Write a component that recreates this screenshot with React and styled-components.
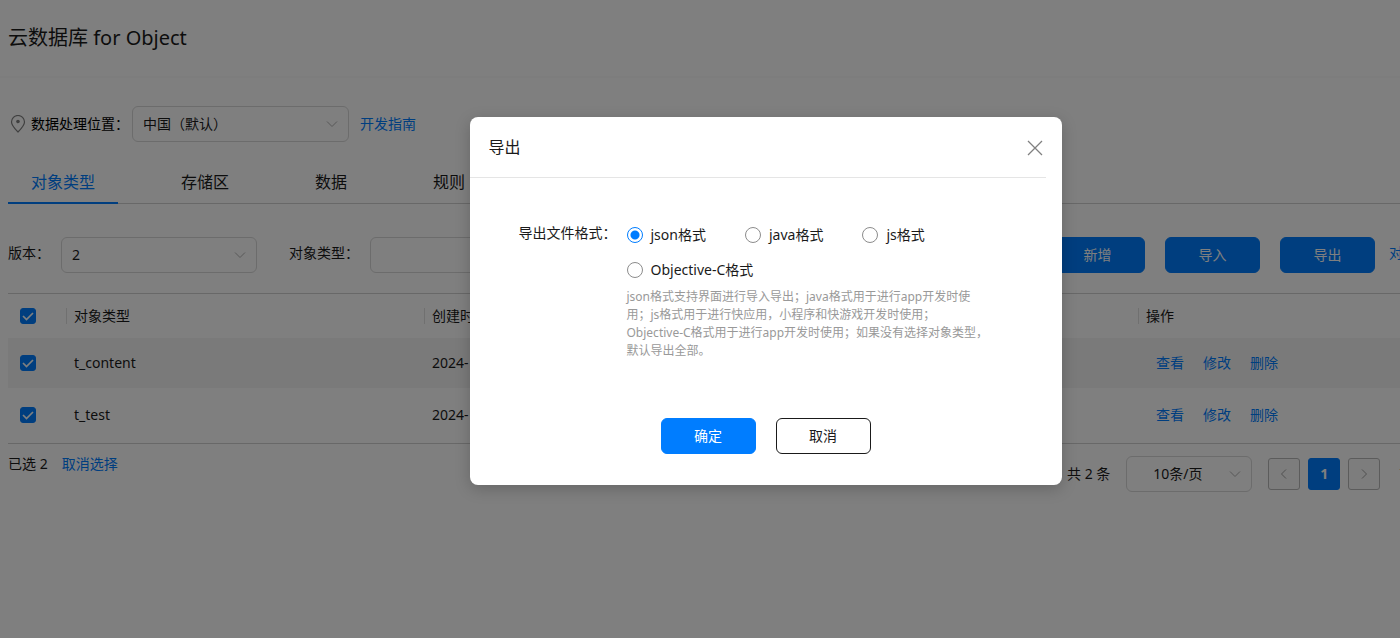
import React, { useState } from 'react';
import styled, { createGlobalStyle, css } from 'styled-components';

const GlobalStyle = createGlobalStyle`
  * {
    box-sizing: border-box;
  }

  body {
    margin: 0;
    overflow-x: hidden;
    background: #fff;
    color: #1a1a1a;
    font-family: 'Noto Sans', 'Noto Sans CJK SC', sans-serif;
    font-size: 14px;
    line-height: 20px;
  }

  button,
  input,
  select {
    font: inherit;
    color: inherit;
  }
`;

const Page = styled.div`
  position: relative;
  min-width: 1531px;
  min-height: 100vh;
  background: #fff;
`;

const Header = styled.header`
  display: flex;
  align-items: center;
  height: 78px;
  padding: 0 8px;
  border-bottom: 2px solid #fafafa;
`;

const Title = styled.h1`
  margin: 0;
  font-size: 20px;
  line-height: 28px;
  font-weight: 400;
`;

const Content = styled.main`
  padding: 29px 8px 0;
`;

const Location = styled.div`
  display: flex;
  align-items: center;
  height: 34px;
`;

const PinIcon = styled.svg`
  width: 16px;
  height: 18px;
  margin: 0 5px 0 2px;
`;

const LocationLabel = styled.label`
  width: 101px;
  color: #000;
`;

const SelectBox = styled.div`
  display: grid;
  align-items: center;
  width: ${(p) => p.$width}px;
  height: 36px;

  > * {
    grid-area: 1 / 1;
  }
`;

const Select = styled.select`
  width: 100%;
  height: 100%;
  padding: 0 ${(p) => (p.$center ? 26 : 10)}px;
  appearance: none;
  border: 1px solid #d8d8d8;
  border-radius: 6px;
  background: transparent;
`;

const Arrow = styled.svg`
  width: 12px;
  height: 12px;
  margin-right: 11px;
  justify-self: end;
  pointer-events: none;
`;

const Link = styled.a`
  color: #007dff;
  text-decoration: none;
  white-space: nowrap;
`;

const GuideLink = styled(Link)`
  margin-left: 11px;
`;

const Tabs = styled.nav`
  display: flex;
  gap: 40px;
  margin-top: 19px;
  border-bottom: 1px solid #d0d0d0;
`;

const Tab = styled.button`
  height: 44px;
  margin-bottom: -1px;
  padding: 2px 23px 0;
  border: 0;
  border-bottom: 2px solid ${(p) => (p.$active ? '#007dff' : 'transparent')};
  background: none;
  color: ${(p) => (p.$active ? '#007dff' : '#1a1a1a')};
  font-size: 16px;
  line-height: 24px;
`;

const Toolbar = styled.div`
  display: flex;
  align-items: center;
  margin: 33px 0 20px;
`;

const Field = styled.div`
  display: flex;
  align-items: center;
  margin-right: 32px;
`;

const FieldLabel = styled.label`
  width: ${(p) => p.$width}px;
  padding-bottom: 4px;
`;

const TextInput = styled.input`
  width: 196px;
  height: 36px;
  padding: 0 10px;
  border: 1px solid #d8d8d8;
  border-radius: 6px;
`;

const Actions = styled.div`
  display: flex;
  align-items: center;
  gap: 14px;
  width: 473px;
  margin-left: auto;
`;

const ButtonGroup = styled.div`
  display: flex;
  gap: 20px;
`;

const HelpLink = styled(Link)`
  padding-bottom: 4px;
`;

const Button = styled.button`
  flex: none;
  width: 95px;
  height: 36px;
  padding: 0;
  border: 1px solid #007dff;
  border-radius: 6px;
  background: #007dff;
  color: #fff;

  ${(p) =>
    p.$outline &&
    css`
      border-color: #1a1a1a;
      background: #fff;
      color: #1a1a1a;
    `}
`;

const Table = styled.table`
  width: 100%;
  border-collapse: collapse;
  border-top: 1px solid #d0d0d0;
  border-bottom: 1px solid #d0d0d0;
  table-layout: fixed;
`;

const HeadCell = styled.th`
  height: 44px;
  padding: 0;
  text-align: left;
  font-weight: 400;
`;

const HeadText = styled.div`
  height: 16px;
  padding-left: 7px;
  border-left: 1px solid #e0e0e0;
  line-height: 16px;
`;

const Row = styled.tr`
  height: ${(p) => (p.$striped ? 50 : 56)}px;
  background: ${(p) => (p.$striped ? '#f5f5f5' : '#fff')};
`;

const Cell = styled.td`
  padding: 0 0 0 8px;
`;

const CheckCell = styled.div`
  display: flex;
  padding-left: 12px;
`;

const SelectCell = styled.td`
  padding: 0;
`;

const Checkbox = styled.input`
  width: 16px;
  height: 16px;
  margin: 0;
  appearance: none;
  border: 1px solid #8c8c8c;
  border-radius: 3px;

  &:checked {
    border-color: #007dff;
    background: #007dff
      url("data:image/svg+xml,%3Csvg xmlns='http://www.w3.org/2000/svg' viewBox='0 0 14 14'%3E%3Cpath d='M2 7l3.500 3.500L12 4' fill='none' stroke='white' stroke-width='1.700'/%3E%3C/svg%3E");
  }
`;

const RowActions = styled.div`
  display: flex;
  gap: 19px;
  padding-left: 10px;
`;

const Footer = styled.div`
  display: flex;
  align-items: flex-start;
  justify-content: space-between;
  padding-top: 10px;
`;

const Selected = styled.div`
  display: flex;
  gap: 14px;
`;

const Pagination = styled.div`
  display: flex;
  align-items: center;
  gap: 16px;
  width: 456px;
  padding-top: 2px;
`;

const PageButtons = styled.div`
  display: flex;
  gap: 8px;
  margin-right: 3px;
`;

const PageButton = styled.button`
  display: flex;
  align-items: center;
  justify-content: center;
  width: 32px;
  height: 32px;
  padding: 0;
  border: 1px solid ${(p) => (p.$active ? '#007dff' : '#b8b8b8')};
  border-radius: 3px;
  background: ${(p) => (p.$active ? '#007dff' : '#fafafa')};
  color: ${(p) => (p.$active ? '#fff' : '#a0a0a0')};
  font-weight: 700;
`;

const Overlay = styled.div`
  position: absolute;
  inset: 0;
  display: flex;
  align-items: flex-start;
  justify-content: center;
  padding-top: 117px;
  background: rgba(0, 0, 0, 0.5);
`;

const Dialog = styled.section`
  width: 592px;
  border-radius: 8px;
  background: #fff;
  box-shadow: 0 4px 16px rgba(0, 0, 0, 0.2);
`;

const DialogHeader = styled.div`
  display: flex;
  align-items: center;
  justify-content: space-between;
  height: 61px;
  margin-right: 16px;
  padding-left: 19px;
  border-bottom: 1px solid #e5e5e5;
`;

const DialogTitle = styled.h2`
  margin: 0;
  font-size: 16px;
  line-height: 24px;
  font-weight: 400;
`;

const CloseButton = styled.button`
  display: flex;
  padding: 4px 3px 3px;
  border: 0;
  background: none;
`;

const DialogBody = styled.div`
  display: flex;
  padding: 45px 49px 0;
`;

const FormatLabel = styled.div`
  flex: none;
  width: 108px;
`;

const FormatField = styled.div`
  width: 364px;
`;

const Options = styled.div`
  display: flex;
  flex-wrap: wrap;
  gap: 15px 39px;
  padding-top: 2px;
`;

const Option = styled.label`
  display: flex;
  align-items: center;
  gap: 8px;
`;

const Radio = styled.input`
  width: 16px;
  height: 16px;
  margin: 0;
  appearance: none;
  border: 1px solid #8c8c8c;
  border-radius: 50%;

  &:checked {
    border-color: #007dff;
    background: radial-gradient(circle, #007dff 4px, #fff 5px);
  }
`;

const Hint = styled.p`
  margin: 8px 0 0;
  color: #999;
  font-size: 12px;
  line-height: 18px;
`;

const DialogFooter = styled.div`
  display: flex;
  justify-content: center;
  gap: 20px;
  padding: 58px 0 31px;
`;

const formats = ['json格式', 'java格式', 'js格式', 'Objective-C格式'];
const rows = ['t_content', 't_test'];

const Dropdown = ({ id, width, center, label, children }) => (
  <SelectBox $width={width}>
    <Select id={id} $center={center} aria-label={label}>
      {children}
    </Select>
    <Arrow viewBox="0 0 12 12" fill="none" stroke="#b0b0b0">
      <path d="M1 3.500l5 5 5-5" />
    </Arrow>
  </SelectBox>
);

const ExportDialog = ({ onClose }) => {
  const [format, setFormat] = useState(formats[0]);

  return (
    <Overlay>
      <Dialog role="dialog" aria-modal="true" aria-labelledby="export-title">
        <DialogHeader>
          <DialogTitle id="export-title">导出</DialogTitle>
          <CloseButton aria-label="关闭" onClick={onClose}>
            <svg width="16" height="16" viewBox="0 0 16 16" stroke="#808080" strokeWidth="1.3">
              <path d="M1 1l14 14M15 1L1 15" />
            </svg>
          </CloseButton>
        </DialogHeader>
        <DialogBody>
          <FormatLabel id="format-label">导出文件格式：</FormatLabel>
          <FormatField>
            <Options role="radiogroup" aria-labelledby="format-label">
              {formats.map((item) => (
                <Option key={item}>
                  <Radio
                    type="radio"
                    name="format"
                    checked={format === item}
                    onChange={() => setFormat(item)}
                  />
                  {item}
                </Option>
              ))}
            </Options>
            <Hint>
              json格式支持界面进行导入导出；java格式用于进行app开发时使用；js格式用于进行快应用，小程序和快游戏开发时使用；
              <br />
              Objective-C格式用于进行app开发时使用；如果没有选择对象类型，默认导出全部。
            </Hint>
          </FormatField>
        </DialogBody>
        <DialogFooter>
          <Button onClick={onClose}>确定</Button>
          <Button $outline onClick={onClose}>取消</Button>
        </DialogFooter>
      </Dialog>
    </Overlay>
  );
};

const App = () => {
  const [open, setOpen] = useState(true);

  return (
    <Page>
      <GlobalStyle />
      <Header>
        <Title>云数据库 for Object</Title>
      </Header>
      <Content>
        <Location>
          <PinIcon viewBox="0 0 16 18" fill="none" stroke="#808080" strokeWidth="1.2">
            <path d="M8 17C5 14 1.500 10.500 1.500 7a6.500 6.500 0 0 1 13 0c0 3.500-3.500 7-6.500 10z" />
            <circle cx="8" cy="6.500" r="1.200" fill="#808080" />
          </PinIcon>
          <LocationLabel htmlFor="location">数据处理位置：</LocationLabel>
          <Dropdown id="location" width={217}>
            <option>中国（默认）</option>
          </Dropdown>
          <GuideLink href="#guide">开发指南</GuideLink>
        </Location>

        <Tabs>
          <Tab $active>对象类型</Tab>
          <Tab>存储区</Tab>
          <Tab>数据</Tab>
          <Tab>规则</Tab>
        </Tabs>

        <Toolbar>
          <Field>
            <FieldLabel htmlFor="version" $width={53}>版本：</FieldLabel>
            <Dropdown id="version" width={196}>
              <option>2</option>
            </Dropdown>
          </Field>
          <Field>
            <FieldLabel htmlFor="object-type" $width={81}>对象类型：</FieldLabel>
            <TextInput id="object-type" />
          </Field>
          <Actions>
            <ButtonGroup>
              <Button>新增</Button>
              <Button>导入</Button>
              <Button onClick={() => setOpen(true)}>导出</Button>
            </ButtonGroup>
            <HelpLink href="#help">对象类型说明</HelpLink>
          </Actions>
        </Toolbar>

        <Table>
          <colgroup>
            <col width="58" />
            <col width="358" />
            <col />
            <col width="385" />
          </colgroup>
          <thead>
            <tr>
              <HeadCell>
                <CheckCell><Checkbox type="checkbox" aria-label="全选" defaultChecked /></CheckCell>
              </HeadCell>
              <HeadCell><HeadText>对象类型</HeadText></HeadCell>
              <HeadCell><HeadText>创建时间</HeadText></HeadCell>
              <HeadCell><HeadText>操作</HeadText></HeadCell>
            </tr>
          </thead>
          <tbody>
            {rows.map((name, i) => (
              <Row key={name} $striped={i % 2 === 0}>
                <SelectCell>
                  <CheckCell><Checkbox type="checkbox" aria-label={name} defaultChecked /></CheckCell>
                </SelectCell>
                <Cell>{name}</Cell>
                <Cell>2024-</Cell>
                <Cell>
                  <RowActions>
                    <Link href="#view">查看</Link>
                    <Link href="#edit">修改</Link>
                    <Link href="#delete">删除</Link>
                  </RowActions>
                </Cell>
              </Row>
            ))}
          </tbody>
        </Table>

        <Footer>
          <Selected>
            <span>已选 2</span>
            <Link href="#clear">取消选择</Link>
          </Selected>
          <Pagination>
            <span>共 2 条</span>
            <Dropdown width={126} center label="每页条数">
              <option>10条/页</option>
            </Dropdown>
            <PageButtons>
              <PageButton aria-label="上一页">
                <svg width="8" height="12" viewBox="0 0 8 12" fill="none" stroke="currentColor">
                  <path d="M6 1.500L1.500 6 6 10.500" />
                </svg>
              </PageButton>
              <PageButton $active>1</PageButton>
              <PageButton aria-label="下一页">
                <svg width="8" height="12" viewBox="0 0 8 12" fill="none" stroke="currentColor">
                  <path d="M2 1.500L6.500 6 2 10.500" />
                </svg>
              </PageButton>
            </PageButtons>
            <span>前往</span>
          </Pagination>
        </Footer>
      </Content>
      {open && <ExportDialog onClose={() => setOpen(false)} />}
    </Page>
  );
};

export default App;
